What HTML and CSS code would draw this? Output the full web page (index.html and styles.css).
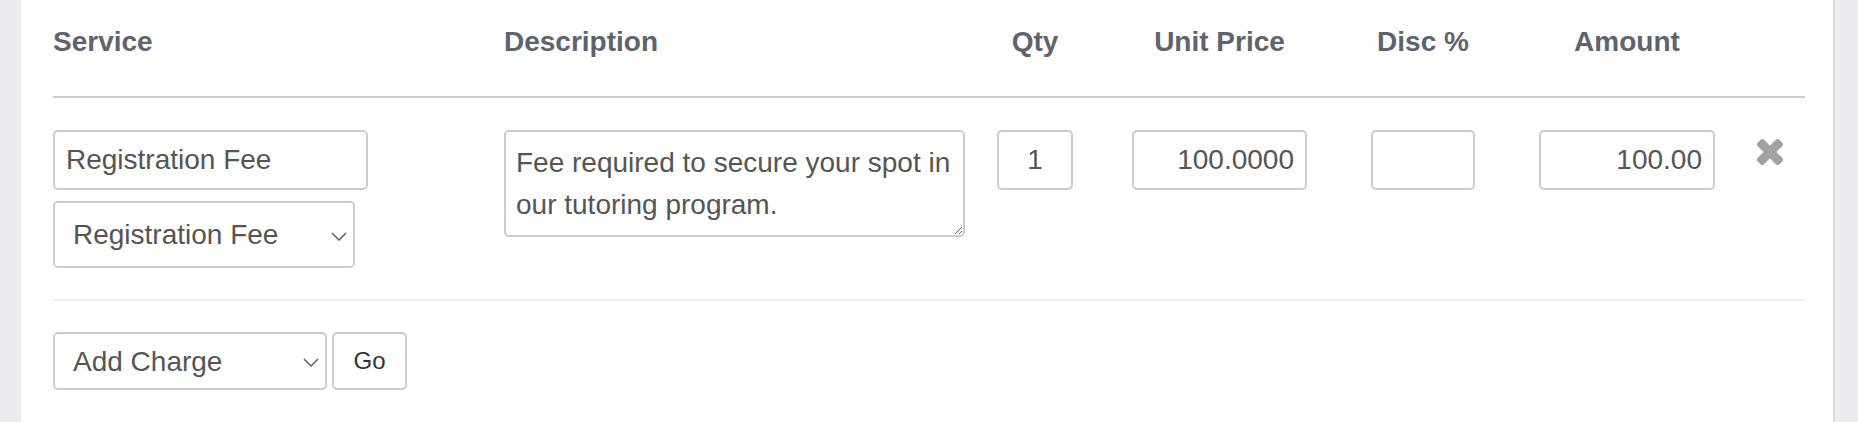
FILE: index.html
```html
<!DOCTYPE html>
<html lang="en">
<head>
    <meta charset="UTF-8">
    <meta name="viewport" content="width=device-width, initial-scale=1.0">
    <title>Invoice Charges</title>
    <link rel="stylesheet" href="styles.css">
</head>
<body>
    <div class="panel">
        <div class="charges">
            <div class="line-grid head">
                <div class="th">Service</div>
                <div class="th">Description</div>
                <div class="th num w-qty">Qty</div>
                <div class="th num w-price">Unit Price</div>
                <div class="th num w-disc">Disc %</div>
                <div class="th num w-amount">Amount</div>
                <div class="th"></div>
            </div>

            <div class="line-grid item">
                <div class="cell stack">
                    <input type="text" class="field w-service" value="Registration Fee">
                    <div class="select-wrap w-service-sel">
                        <select class="field select tall">
                            <option>Registration Fee</option>
                        </select>
                        <svg class="chevron" width="16" height="9" viewBox="0 0 16 9"><path d="M1 1 L8 8 L15 1" fill="none" stroke="#666" stroke-width="1.6"/></svg>
                    </div>
                </div>
                <div class="cell">
                    <textarea class="field desc">Fee required to secure your spot in our tutoring program.</textarea>
                </div>
                <div class="cell">
                    <input type="text" class="field w-qty center" value="1">
                </div>
                <div class="cell">
                    <input type="text" class="field w-price right" value="100.0000">
                </div>
                <div class="cell">
                    <input type="text" class="field w-disc right" value="">
                </div>
                <div class="cell">
                    <input type="text" class="field w-amount right" value="100.00">
                </div>
                <div class="cell">
                    <a href="#" class="remove" title="Remove">
                        <svg width="28" height="28" viewBox="0 0 28 28">
                            <rect x="-1.3" y="9.5" width="30.6" height="9" rx="2.5" transform="rotate(45 14 14)" fill="#a2a2a2"/>
                            <rect x="-1.3" y="9.5" width="30.6" height="9" rx="2.5" transform="rotate(-45 14 14)" fill="#a2a2a2"/>
                        </svg>
                    </a>
                </div>
            </div>

            <div class="add-row">
                <div class="select-wrap w-add">
                    <select class="field select">
                        <option>Add Charge</option>
                    </select>
                    <svg class="chevron" width="16" height="9" viewBox="0 0 16 9"><path d="M1 1 L8 8 L15 1" fill="none" stroke="#666" stroke-width="1.6"/></svg>
                </div>
                <button type="button" class="go">Go</button>
            </div>
        </div>
    </div>
</body>
</html>
```

FILE: styles.css
```css
body {
    margin: 0;
    background-color: #ececf0;
    font-family: "Liberation Sans", Arial, Helvetica, sans-serif;
}
.panel {
    margin-left: 21px;
    width: 1814px;
    min-height: 422px;
    box-sizing: border-box;
    background: #fff;
    border-right: 2px solid #dcdcdc;
    padding: 26px 30px 0 32px;
}
.charges {
    width: 1752px;
}
.line-grid {
    display: grid;
    grid-template-columns: 451px 493px 135px 239px 168px 217px 1fr;
    align-items: start;
}
.head {
    border-bottom: 2px solid #ccc;
}
.th {
    font-size: 28px;
    font-weight: bold;
    line-height: 32px;
    color: #5f6370;
    padding-bottom: 38px;
}
.th.num {
    text-align: center;
}
.item {
    padding: 32px 0 31px;
    border-bottom: 2px solid #eee;
}
.stack {
    display: flex;
    flex-direction: column;
    align-items: flex-start;
    gap: 11px;
}
.field {
    display: block;
    box-sizing: border-box;
    height: 60px;
    margin: 0;
    padding: 0 11px;
    border: 2px solid #ccc;
    border-radius: 5px;
    background: #fff;
    font-family: inherit;
    font-size: 28px;
    color: #555;
    outline: none;
}
.center {
    text-align: center;
}
.right {
    text-align: right;
}
.w-service {
    width: 315px;
}
.w-service-sel {
    width: 302px;
}
.w-qty {
    width: 76px;
}
.w-price {
    width: 175px;
}
.w-disc {
    width: 104px;
}
.w-amount {
    width: 176px;
}
.w-add {
    width: 274px;
}
.desc {
    width: 461px;
    height: 107px;
    padding: 10px 6px 10px 10px;
    line-height: 42px;
    resize: vertical;
}
.select-wrap {
    position: relative;
}
.select {
    width: 100%;
    height: 58px;
    padding-left: 18px;
    -webkit-appearance: none;
    appearance: none;
}
.select.tall {
    height: 67px;
}
.chevron {
    position: absolute;
    right: 8px;
    top: 50%;
    margin-top: -3px;
}
.remove {
    display: block;
    width: 28px;
    height: 28px;
    margin-top: 8px;
}
.add-row {
    display: flex;
    gap: 5px;
    padding-top: 31px;
}
.go {
    width: 75px;
    height: 58px;
    border: 2px solid #ccc;
    border-radius: 5px;
    background: #fff;
    font-family: inherit;
    font-size: 24px;
    color: #333;
    cursor: pointer;
}
```
